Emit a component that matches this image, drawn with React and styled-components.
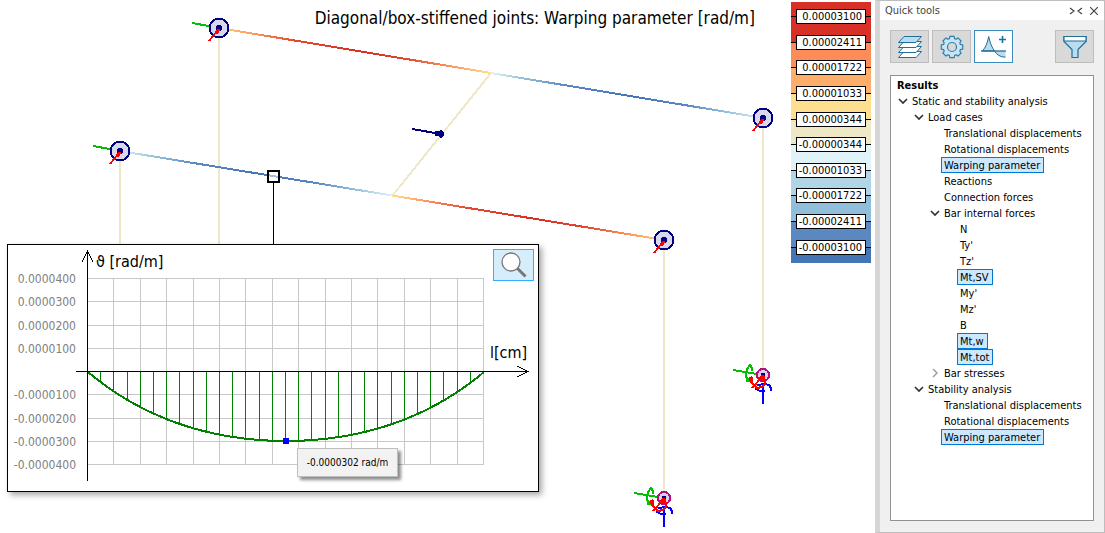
import styled, { createGlobalStyle } from "styled-components";

const GlobalStyle = createGlobalStyle`
  * {
    box-sizing: border-box;
  }
  body {
    margin: 0;
    background: #ffffff;
    color: #000000;
    font-family: Tahoma, "DejaVu Sans Condensed", "DejaVu Sans", sans-serif;
    font-size: 11px;
  }
`;

const Page = styled.div`
  display: flex;
  min-height: 100vh;
`;

const Workspace = styled.main`
  position: relative;
  flex: 1;
  min-width: 0;
  overflow: hidden;
  display: flex;
  align-items: flex-start;
  padding: 2px 4px 0 0;
`;

/* the drawing lies under the title and the legend */
const Drawing = styled.svg`
  position: absolute;
  left: 0;
  top: 0;
`;

const Title = styled.h1`
  position: relative;
  flex: 1;
  margin: 0;
  padding: 6px 36px 0 0;
  font-size: 17px;
  font-weight: 400;
  line-height: 20px;
  text-align: right;
  white-space: nowrap;
`;

const LegendList = styled.ul`
  position: relative;
  display: flex;
  flex-direction: column;
  width: 80px;
  height: 261px;
  margin: 0;
  padding: 2px 0 3px;
  list-style: none;
`;

const LegendItem = styled.li`
  flex: 1;
  display: flex;
  align-items: center;

  &::before,
  &::after {
    content: "";
    height: 1px;
    width: 5px;
    background: #000000;
  }
`;

const LegendValue = styled.span`
  flex: 1;
  height: 15px;
  padding-right: 3px;
  border: 1px solid #000000;
  background: #ffffff;
  font-size: 11px;
  line-height: 13px;
  text-align: right;
`;

/* floating window with the diagram of the picked bar */
const DiagramWindow = styled.section`
  position: absolute;
  left: 7px;
  top: 244px;
  width: 532px;
  height: 248px;
  border: 1px solid #000000;
  background: #ffffff;
  box-shadow: 3px 3px 6px rgba(0, 0, 0, 0.35);
`;

const Diagram = styled.svg`
  display: block;
`;

const AxisLabel = styled.text`
  font-size: 16px;
`;

const TickLabel = styled.text`
  font-size: 12px;
  fill: #808080;
  text-anchor: end;
`;

const ZoomButton = styled.button`
  position: absolute;
  right: 4px;
  top: 4px;
  display: flex;
  align-items: center;
  justify-content: center;
  width: 41px;
  height: 32px;
  padding: 0;
  border: 1px solid #33adff;
  background: #d6edfc;
`;

const Tooltip = styled.div`
  position: absolute;
  left: 289px;
  top: 203px;
  width: 101px;
  height: 29px;
  border: 1px solid #bebebe;
  background: #f2f2f2;
  box-shadow: 3px 3px 3px rgba(0, 0, 0, 0.45);
  font-size: 10px;
  line-height: 28px;
  text-align: center;
  white-space: nowrap;
`;

const Panel = styled.aside`
  display: flex;
  flex-direction: column;
  width: 230px;
  border: 1px solid #bdbdbd;
  border-left: 5px solid #d6d6d6;
  background: #f0f0f0;
`;

const PanelHeader = styled.header`
  display: flex;
  align-items: center;
  height: 19px;
  padding: 0 6px 0 5px;
  background: #ffffff;
  color: #444444;
`;

const PanelTitle = styled.h2`
  flex: 1;
  margin: 0;
  font-size: 11px;
  font-weight: 400;
`;

const HeaderButton = styled.button`
  display: flex;
  padding: 0;
  margin-left: 7px;
  border: 0;
  background: none;
`;

const Toolbar = styled.div`
  display: flex;
  gap: 3px;
  padding: 10px 10px 12px;
`;

const ToolButton = styled.button`
  display: flex;
  align-items: center;
  justify-content: center;
  width: 39px;
  height: 33px;
  padding: 0;
  border: 1px solid ${(props) => (props.$active ? "#3c8dbc" : "#bdbdbd")};
  background: ${(props) => (props.$active ? "#ffffff" : "#d9d9d9")};

  &:last-child {
    margin-left: auto;
  }
`;

const TreeBox = styled.div`
  flex: 1;
  margin: 0 10px 11px;
  padding: 1px 0 0 6px;
  border: 1px solid #919191;
  background: #ffffff;
`;

const TreeTitle = styled.h3`
  height: 16px;
  margin: 0;
  font-size: 11px;
  line-height: 18px;
`;

const Branch = styled.ul`
  margin: 0;
  padding: 0 0 0 ${(props) => (props.$nested ? 16 : 0)}px;
  list-style: none;
`;

const Row = styled.div`
  display: flex;
  align-items: center;
  height: 16px;
`;

const Toggle = styled.button`
  display: flex;
  justify-content: center;
  width: 12px;
  padding: 0;
  border: 0;
  background: none;
`;

const Leaf = styled.button`
  height: 16px;
  margin-left: ${(props) => (props.$indent ? 12 : 0)}px;
  padding: 1px 3px 0 2px;
  border: 1px solid ${(props) => (props.$selected ? "#0078d7" : "transparent")};
  background: ${(props) => (props.$selected ? "#cce8ff" : "transparent")};
  color: #000000;
  font: inherit;
  line-height: 13px;
  white-space: nowrap;
`;

const levels = [
  "0.00003100",
  "0.00002411",
  "0.00001722",
  "0.00001033",
  "0.00000344",
  "-0.00000344",
  "-0.00001033",
  "-0.00001722",
  "-0.00002411",
  "-0.00003100",
];

const bands = [
  "#d73027",
  "#d73027",
  "#fc8d59",
  "#fdae6b",
  "#fedf90",
  "#efe8c6",
  "#e0f3f8",
  "#b1d4e6",
  "#91bfdb",
  "#5b88c0",
  "#4575b4",
];

/* every band ends at the tick of its level */
const bandStops = bands
  .map((color, i) => {
    const start = i === 0 ? 0 : Math.round(15 + (i - 1) * 25.6);
    const end = i === bands.length - 1 ? 261 : Math.round(15 + i * 25.6);
    return `${color} ${start}px ${end}px`;
  })
  .join(", ");

const LegendScale = styled(LegendList)`
  background: linear-gradient(${bandStops});
`;

const tree = [
  {
    name: "Static and stability analysis",
    open: true,
    items: [
      {
        name: "Load cases",
        open: true,
        items: [
          { name: "Translational displacements" },
          { name: "Rotational displacements" },
          { name: "Warping parameter", selected: true },
          { name: "Reactions" },
          { name: "Connection forces" },
          {
            name: "Bar internal forces",
            open: true,
            items: [
              { name: "N" },
              { name: "Ty'" },
              { name: "Tz'" },
              { name: "Mt,SV", selected: true },
              { name: "My'" },
              { name: "Mz'" },
              { name: "B" },
              { name: "Mt,w", selected: true },
              { name: "Mt,tot", selected: true },
            ],
          },
          { name: "Bar stresses", open: false, items: [] },
        ],
      },
      {
        name: "Stability analysis",
        open: true,
        items: [
          { name: "Translational displacements" },
          { name: "Rotational displacements" },
          { name: "Warping parameter", selected: true },
        ],
      },
    ],
  },
];

function TreeBranch({ items, nested }) {
  return (
    <Branch $nested={nested}>
      {items.map((item) => (
        <li key={item.name}>
          <Row>
            {item.items && (
              <Toggle aria-label={item.name} aria-expanded={item.open}>
                <svg width="10" height="10" viewBox="0 0 10 10" fill="none">
                  {item.open ? (
                    <path d="M1 3l4 4 4-4" stroke="#333333" strokeWidth="1.7" />
                  ) : (
                    <path d="M3 1l4 4-4 4" stroke="#a0a0a0" strokeWidth="1.5" />
                  )}
                </svg>
              </Toggle>
            )}
            <Leaf $selected={item.selected} $indent={!item.items}>
              {item.name}
            </Leaf>
          </Row>
          {item.open && <TreeBranch items={item.items} nested />}
        </li>
      ))}
    </Branch>
  );
}

function Hinge({ x, y, link }) {
  return (
    <g transform={`translate(${x} ${y})`}>
      {link && <path d="M-27-5L-10-2" stroke="#00c000" strokeWidth="2" />}
      <circle r="9.5" fill="#d8d8ec" stroke="#000080" strokeWidth="2" />
      <circle r="3" fill="#000080" />
      <path d="M-10 13L-2 3" stroke="#ff0000" strokeWidth="2" />
      <path d="M1 1l-1 4-3 1-2-2 3-3z" fill="#ff0000" />
    </g>
  );
}

function Support({ x, y }) {
  return (
    <g transform={`translate(${x} ${y})`} fill="none" strokeWidth="2">
      <path d="M-30-5L-6-1" stroke="#00c000" />
      <path d="M-11-4v-3l-2-3-3 4-1 6 1 5 4 1" stroke="#00c000" />
      <path d="M-17 2l4 1v4h-4z" fill="#00c000" />
      <circle r="6" fill="#dcd0e8" stroke="#b01080" />
      <circle r="2.5" fill="#000080" />
      <path d="M0 8v21M-7 12v2l4 2h5M-6 10l8-1 4 1 2 3v3" stroke="#0000ff" />
      <path d="M-1 2L-11 13M-13 2l2 6 5 5 5-1 3-3V5L0 0" stroke="#ff0000" />
      <path d="M-5 4l3-4h2l2 4-3 2zM-14 3l3-2 1 2v3l-3 2z" fill="#ff0000" />
    </g>
  );
}

function Model() {
  return (
    <Drawing width="872" height="533" viewBox="0 0 872 533" shapeRendering="crispEdges" aria-hidden="true">
      <defs>
        <linearGradient id="rear" gradientUnits="userSpaceOnUse" x1="219" y1="0" x2="763" y2="0">
          <stop offset="0.02" stopColor="#fdbe70" />
          <stop offset="0.06" stopColor="#fb9d62" />
          <stop offset="0.14" stopColor="#e4492f" />
          <stop offset="0.26" stopColor="#d73027" />
          <stop offset="0.34" stopColor="#e0452f" />
          <stop offset="0.42" stopColor="#fc8d59" />
          <stop offset="0.5" stopColor="#fee090" />
          <stop offset="0.5" stopColor="#e0f3f8" />
          <stop offset="0.56" stopColor="#91bfdb" />
          <stop offset="0.64" stopColor="#5b88c0" />
          <stop offset="0.76" stopColor="#4575b4" />
          <stop offset="0.86" stopColor="#5b88c0" />
          <stop offset="0.93" stopColor="#91bfdb" />
          <stop offset="0.98" stopColor="#c5e1ed" />
        </linearGradient>
        <linearGradient id="front" gradientUnits="userSpaceOnUse" x1="120" y1="0" x2="664" y2="0">
          <stop offset="0.02" stopColor="#c5e1ed" />
          <stop offset="0.07" stopColor="#91bfdb" />
          <stop offset="0.14" stopColor="#5b88c0" />
          <stop offset="0.26" stopColor="#4575b4" />
          <stop offset="0.36" stopColor="#5b88c0" />
          <stop offset="0.43" stopColor="#91bfdb" />
          <stop offset="0.5" stopColor="#e0f3f8" />
          <stop offset="0.5" stopColor="#fee090" />
          <stop offset="0.57" stopColor="#fc8d59" />
          <stop offset="0.64" stopColor="#e4492f" />
          <stop offset="0.76" stopColor="#d73027" />
          <stop offset="0.86" stopColor="#e4492f" />
          <stop offset="0.94" stopColor="#fb9d62" />
          <stop offset="0.98" stopColor="#fdbe70" />
        </linearGradient>
      </defs>
      <path
        d="M120 151v100M219 28v223M763 118v257M664 240v258M491 73L393 195"
        stroke="#efe8c6"
        strokeWidth="2"
      />
      <path d="M219 28L763 118" stroke="url(#rear)" strokeWidth="2" />
      <path d="M120 151L664 240" stroke="url(#front)" strokeWidth="2" />
      <path d="M412 129L441 134" stroke="#000080" strokeWidth="2" />
      <path d="M435 131h3l3-1 3 2v4l-3 2-3-2h-3z" fill="#000080" />
      <path d="M273.5 182v70" stroke="#000000" />
      <rect x="268" y="171" width="11" height="11" fill="#ffffff" fillOpacity="0.5" stroke="#000000" strokeWidth="2" />
      <Hinge x={219} y={28} link />
      <Hinge x={120} y={151} link />
      <Hinge x={763} y={118} />
      <Hinge x={664} y={240} />
      <Support x={763} y={375} />
      <Support x={664} y={498} />
    </Drawing>
  );
}

/* diagram area inside the window */
const originX = 80;
const originY = 127;
const span = 396;
const stepY = 23.25;
const depth = 69;

const columns = Array.from({ length: 15 }, (_, i) => i + 1);
const gridRows = [-4, -3, -2, -1, 1, 2, 3, 4];

function deflection(t) {
  const u = 2 * t - 1;
  return depth * (1 - (u * u * (1 + 0.25 * u * u)) / 1.25);
}

const curve = Array.from({ length: 61 }, (_, i) => {
  const t = i / 60;
  return `${originX + span * t},${originY + deflection(t)}`;
}).join(" ");

function tickText(row) {
  return `${row > 0 ? "-" : ""}0.0000${Math.abs(row)}00`;
}

function WarpingDiagram() {
  return (
    <DiagramWindow>
      <Diagram width="530" height="246" viewBox="0 0 530 246">
        <g stroke="#c8c8c8" shapeRendering="crispEdges">
          {columns.map((i) => {
            const x = Math.round(originX - 1 + (span * i) / 15) + 0.5;
            return <line key={i} x1={x} x2={x} y1="33" y2="220" />;
          })}
          {gridRows.map((row) => {
            const y = Math.round(originY - 1 + row * stepY) + 0.5;
            return <line key={row} x1="80" x2="476" y1={y} y2={y} />;
          })}
        </g>
        {gridRows.map((row) => (
          <TickLabel key={row} x="68" y={Math.round(originY + 4 + row * stepY)}>
            {tickText(row)}
          </TickLabel>
        ))}
        <g stroke="#008000" fill="none" shapeRendering="crispEdges">
          {Array.from({ length: 29 }, (_, i) => {
            const t = (i + 1) / 30;
            const x = Math.round(originX - 1 + span * t) + 0.5;
            return <line key={i} x1={x} x2={x} y1={originY} y2={originY + deflection(t)} />;
          })}
          <polyline points={curve} strokeWidth="2" />
        </g>
        <g stroke="#000000" fill="none" shapeRendering="crispEdges">
          <path d="M79.5 6v230M68 126.5h452" />
          <path d="M74 17l5.500-11 5.500 11M509 121l11 5.500-11 5.500" />
        </g>
        <rect x="275" y="193" width="6" height="6" fill="#0000ff" />
        <AxisLabel x="88" y="22">ϑ [rad/m]</AxisLabel>
        <AxisLabel x="482" y="113">l[cm]</AxisLabel>
      </Diagram>
      <ZoomButton aria-label="Zoom">
        <svg width="26" height="26" viewBox="0 0 26 26">
          <path d="M16 16l8.500 8.500" stroke="#777777" strokeWidth="3" />
          <circle cx="10" cy="10" r="9" fill="#ffffff" stroke="#777777" strokeWidth="1.300" />
        </svg>
      </ZoomButton>
      <Tooltip role="tooltip">-0.0000302 rad/m</Tooltip>
    </DiagramWindow>
  );
}

function LayersIcon() {
  return (
    <svg width="26" height="24" viewBox="0 0 26 24" stroke="#1f6f97">
      {[16.5, 11.5, 6.5].map((y) => (
        <path key={y} d={`M1.500 ${y + 6}L7 ${y}H24.500L19 ${y + 6}z`} fill="#ffffff" />
      ))}
      <path d="M1.500 7.500L7 1.500H24.500L19 7.500z" fill="#b9dcf0" />
    </svg>
  );
}

/* outline of a wheel with eight teeth */
const gearPath =
  Array.from({ length: 8 }, (_, i) =>
    [
      [-0.3, 8.8],
      [-0.2, 10.9],
      [0.2, 10.9],
      [0.3, 8.8],
    ]
      .map(([offset, radius]) => {
        const angle = (i * Math.PI) / 4 + offset;
        return `${12 + radius * Math.cos(angle)} ${12 + radius * Math.sin(angle)}`;
      })
      .join("L")
  ).reduce((path, tooth) => `${path}${path ? "L" : "M"}${tooth}`, "") + "z";

function GearIcon() {
  return (
    <svg width="24" height="24" viewBox="0 0 24 24" stroke="#2f7ea8" strokeWidth="1.200" strokeLinejoin="round">
      <path d={gearPath} fill="#c9e4f4" />
      <circle cx="12" cy="12" r="4.500" fill="#d9d9d9" />
    </svg>
  );
}

function ResultsIcon() {
  return (
    <svg width="28" height="26" viewBox="0 0 28 26" stroke="#1f6f97">
      <path d="M2.500 17C5.500 13.500 7.500 9 8.700 2.500C10 9 12 13.500 14.500 17z" fill="#b9dcf0" />
      <path d="M14.500 17C17 21 20 23 25.500 23.200V17z" fill="#b9dcf0" stroke="none" />
      <path d="M14.500 17C17 21 20 23 25.500 23.200" fill="none" />
      <path d="M1 17h25" strokeWidth="1.300" />
      <path d="M19 5.500h7M22.500 2v7" strokeWidth="1.600" />
    </svg>
  );
}

function FilterIcon() {
  return (
    <svg width="26" height="26" viewBox="0 0 26 26" stroke="#1f6f97" strokeWidth="1.200">
      <path d="M2 2.500h22v5l-8 8v8h-6v-8l-8-8z" fill="#b9dcf0" />
      <path d="M2 2.500h22v4.500h-22z" fill="#ffffff" />
    </svg>
  );
}

export default function App() {
  return (
    <Page>
      <GlobalStyle />
      <Workspace>
        <Model />
        <Title>Diagonal/box-stiffened joints: Warping parameter [rad/m]</Title>
        <LegendScale>
          {levels.map((level) => (
            <LegendItem key={level}>
              <LegendValue>{level}</LegendValue>
            </LegendItem>
          ))}
        </LegendScale>
        <WarpingDiagram />
      </Workspace>
      <Panel>
        <PanelHeader>
          <PanelTitle>Quick tools</PanelTitle>
          <HeaderButton aria-label="Collapse">
            <svg width="14" height="8" viewBox="0 0 14 8" fill="none" stroke="#444444" strokeWidth="1.200">
              <path d="M1 1l4 3-4 3M13 1l-4 3 4 3" />
            </svg>
          </HeaderButton>
          <HeaderButton aria-label="Close">
            <svg width="8" height="8" viewBox="0 0 8 8" stroke="#444444" strokeWidth="1.200">
              <path d="M0 0l8 8M8 0l-8 8" />
            </svg>
          </HeaderButton>
        </PanelHeader>
        <Toolbar>
          <ToolButton aria-label="Layers">
            <LayersIcon />
          </ToolButton>
          <ToolButton aria-label="Settings">
            <GearIcon />
          </ToolButton>
          <ToolButton aria-label="Results" $active>
            <ResultsIcon />
          </ToolButton>
          <ToolButton aria-label="Filter">
            <FilterIcon />
          </ToolButton>
        </Toolbar>
        <TreeBox>
          <TreeTitle>Results</TreeTitle>
          <TreeBranch items={tree} />
        </TreeBox>
      </Panel>
    </Page>
  );
}
